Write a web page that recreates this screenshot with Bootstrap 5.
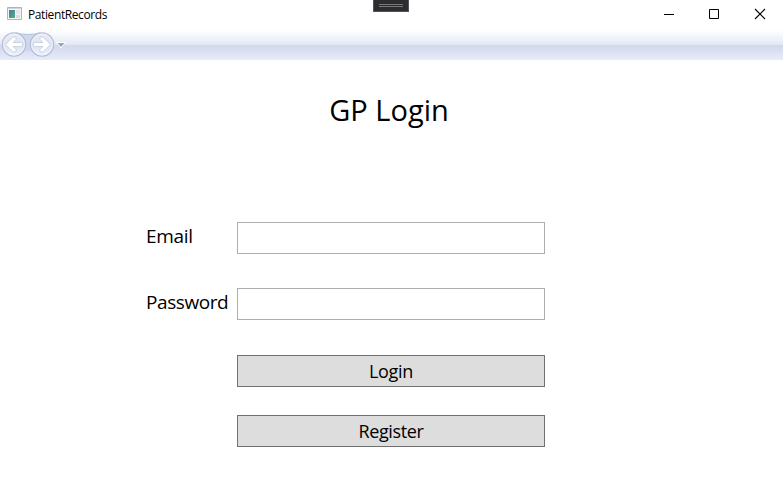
<!DOCTYPE html>
<html lang="en">
<head>
<meta charset="utf-8">
<title>PatientRecords</title>
<link href="https://cdn.jsdelivr.net/npm/bootstrap@5.3.0/dist/css/bootstrap.min.css" rel="stylesheet">
<style>
body{font-family:"Open Sans","Noto Sans",sans-serif;color:#000;height:500px}
svg{display:block;flex:none}
.titlebar{height:30px;padding-left:7px}
.app-name{font-size:12px;letter-spacing:-.4px;line-height:16px;margin-left:6px}
.grip{left:373px;top:0;width:36px;height:12px;background:#2d2d30;border:1px solid #555558;border-top:0}
.grip::before{content:"";display:block;margin:4px 5px 0;height:3px;border:solid #77777b;border-width:1px 0}
.win-btn{width:46px;height:30px;padding:0;border:0;background:none}
.navstrip{height:30px;background:linear-gradient(#fff 0,#e3e8f3 15px,#d0d8ec 15px,#e8ecfb 30px)}
.page-title{font-size:29px;line-height:40px;letter-spacing:0;margin:30px 5px 0 0;font-weight:400}
.login-form{width:399px;margin:92px 0 0 146px}
.field-row{height:32px}
.field-row+.field-row{margin-top:34px}
.field-label{width:91px;font-size:19px;line-height:28px;letter-spacing:-.3px}
.field-label.tight{letter-spacing:-.42px}
.box{height:32px;border:1px solid #abadb3;border-radius:0;padding:2px 6px}
.actions{margin:35px 0 0 91px;gap:28px}
.action{height:32px;background:#ddd;border:1px solid #707070;border-radius:0;padding:0;font-size:18px;line-height:30px;letter-spacing:-.35px;color:#000}
</style>
<script src="https://cdn.jsdelivr.net/npm/bootstrap@5.3.0/dist/js/bootstrap.bundle.min.js"></script>
</head>
<body class="bg-white overflow-hidden position-relative">
<header class="titlebar d-flex align-items-center">
<svg class="mb-1" width="15" height="13" viewBox="0 0 15 13"><defs><linearGradient id="pane" x2="1" y2="1"><stop stop-color="#427ba0"/><stop offset="1" stop-color="#58ad82"/></linearGradient></defs><path d="M.5.5h14v12H.5z" fill="#f5f5f5" stroke="#b0b2b6"/><path d="M1 1h13v1H1z" fill="#d2d4d8"/><path d="M2 3h6v8H2z" fill="url(#pane)"/><path d="M9 3h4v4H9z" fill="#e1e5e9"/><path d="M9 8h4v3H9z" fill="#d9dcdf"/></svg>
<span class="app-name">PatientRecords</span>
<div class="d-flex ms-auto">
<button class="win-btn" aria-label="Minimize"><svg width="46" height="30"><path d="M19 14h10v1H19z"/></svg></button>
<button class="win-btn" aria-label="Maximize"><svg width="46" height="30"><path d="M18.500 9.500h9v9h-9z" fill="none" stroke="#000"/></svg></button>
<button class="win-btn" aria-label="Close"><svg width="46" height="30"><path d="M18 9l10 10M28 9L18 19" stroke="#000" stroke-width="1.100"/></svg></button>
</div>
</header>
<div class="grip position-absolute"></div>
<nav class="navstrip" aria-label="History">
<svg width="70" height="30" viewBox="0 0 70 30"><defs><linearGradient id="disc" x2="0" y2="1"><stop stop-color="#e9edf7"/><stop offset=".5" stop-color="#dce2f1"/><stop offset="1" stop-color="#f1f3fd"/></linearGradient></defs>
<path d="M14 2.500Q19 4.500 28 4.500T42 2.500V25Q28 17 14 25z" fill="#ced7ec"/><path d="M16 2.800Q21 4.500 28 4.500T40 2.800" fill="none" stroke="#b4c2e0"/>
<g fill="url(#disc)" stroke="#b5bcd8" stroke-width="1.300"><circle cx="14" cy="14.500" r="11.600"/><circle cx="42" cy="14.500" r="11.600"/></g>
<g fill="none" stroke="#f4f6fd" stroke-width=".8"><circle cx="14" cy="14.500" r="10.500"/><circle cx="42" cy="14.500" r="10.500"/></g>
<path id="arrow" d="M5.500 14.500l7.500-7.500h3v2.500l-3 3h9.500v4H13l3 3V22h-3z" fill="#fff" stroke="#c4cbe0" stroke-width=".8" stroke-linejoin="round"/>
<use href="#arrow" transform="matrix(-1 0 0 1 56 0)"/>
<path d="M56 12h10l-5 6.500z" fill="#fff"/><path d="M57.500 13h7l-3.500 4z" fill="#9aa2bd"/></svg>
</nav>
<main>
<h1 class="page-title text-center"><span>GP Login</span></h1>
<form class="login-form">
<div class="field-row d-flex"><label class="field-label flex-shrink-0" for="email">Email</label><input class="box form-control" id="email" type="email"></div>
<div class="field-row d-flex"><label class="field-label tight flex-shrink-0" for="pw">Password</label><input class="box form-control" id="pw" type="password"></div>
<div class="actions d-flex flex-column"><button class="action btn" type="button">Login</button><button class="action btn" type="button">Register</button></div>
</form>
</main>
</body>
</html>
